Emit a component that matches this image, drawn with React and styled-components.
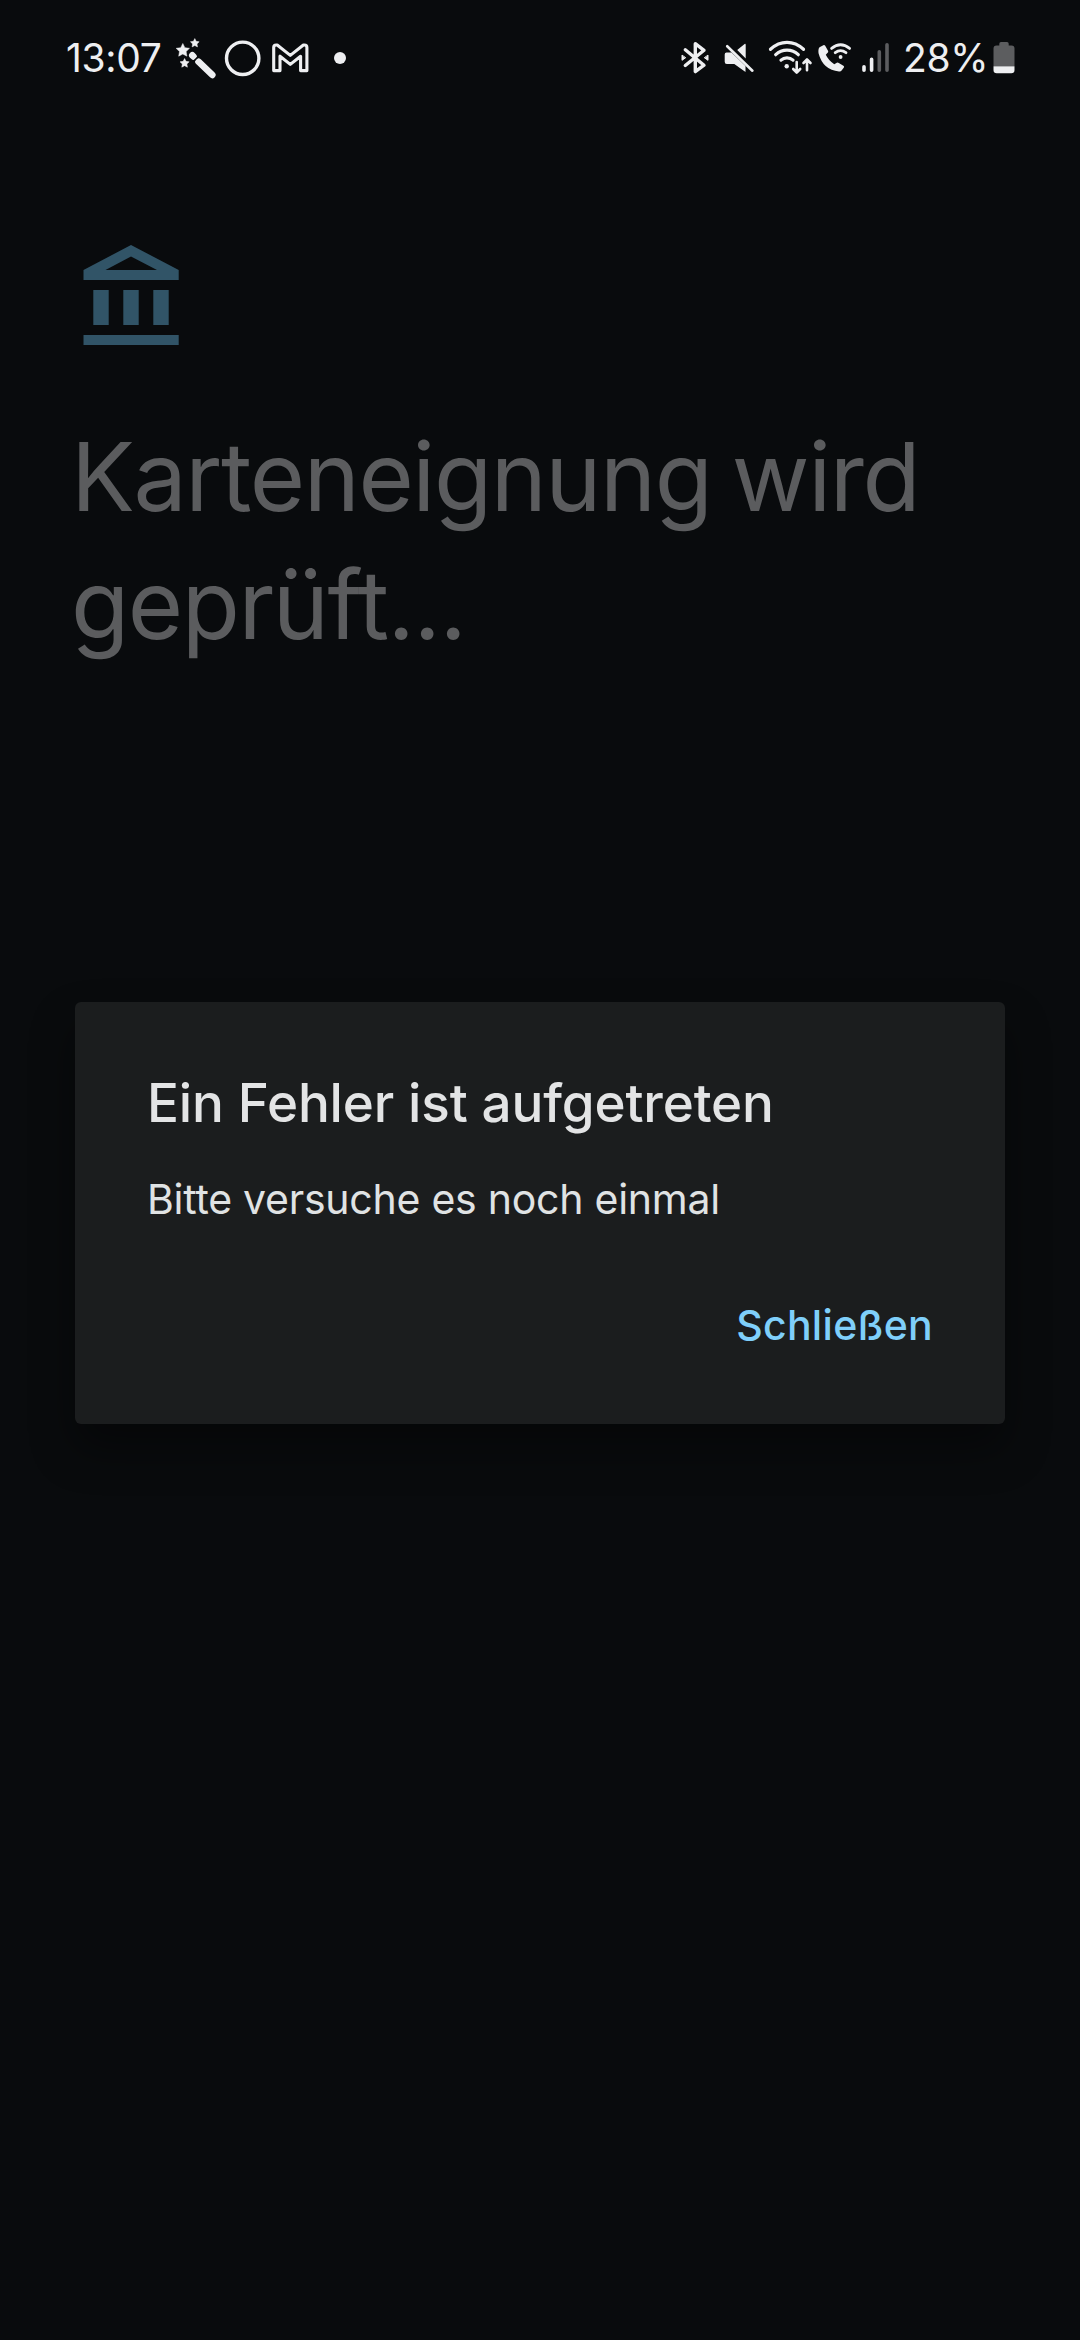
import React from 'react';
import styled, { createGlobalStyle } from 'styled-components';

const GlobalStyle = createGlobalStyle`
  * { box-sizing: border-box; }
  body {
    margin: 0;
    background: #090b0d;
    font-family: Inter, Roboto, sans-serif;
  }
`;

const Screen = styled.div`
  width: 1080px;
  height: 2340px;
  display: flex;
  flex-direction: column;
  background: #090b0d;
  overflow: hidden;
`;

const StatusBar = styled.header`
  display: flex;
  justify-content: space-between;
  padding: 36px 65px 0 66px;
  height: 116px;
  color: #eeeff1;
`;

const StatusGroup = styled.div`
  display: flex;
  height: 44px;
`;

const StatusText = styled.span`
  width: ${(p) => p.$width}px;
  margin-left: ${(p) => p.$gap || 0}px;
  font-size: 39px;
  line-height: 44px;
  letter-spacing: ${(p) => p.$tracking}px;
  white-space: nowrap;
`;

const Glyph = styled.svg`
  flex: none;
  display: block;
  height: 44px;
  margin-left: ${(p) => p.$gap || 0}px;
`;

const Content = styled.main`
  display: flex;
  flex-direction: column;
  padding: 129px 75px 0;
  height: 886px;
`;

const BankIcon = styled.svg`
  display: block;
  margin-left: 8px;
  fill: #315467;
`;

const Heading = styled.h1`
  margin: 68px 0 0 -4px;
  font-size: 95px;
  font-weight: 400;
  line-height: 128px;
  letter-spacing: -1.45px;
  word-spacing: -5px;
  color: #5b5c5e;
  white-space: nowrap;
`;

const Dialog = styled.section`
  width: 930px;
  height: 422px;
  margin: 0 auto;
  padding: 63px 72px 0 72px;
  display: flex;
  flex-direction: column;
  border-radius: 6px;
  background: #1b1d1e;
  box-shadow: 0 24px 44px rgba(0, 0, 0, 0.4);
`;

const DialogTitle = styled.h2`
  margin: 0;
  font-size: 53px;
  font-weight: 500;
  line-height: 76px;
  letter-spacing: -0.15px;
  color: #e3e4e5;
  white-space: nowrap;
`;

const DialogText = styled.p`
  margin: 30px 0 0;
  font-size: 41px;
  line-height: 56px;
  letter-spacing: -0.25px;
  color: #e0e3e4;
  white-space: nowrap;
`;

const Actions = styled.footer`
  display: flex;
  justify-content: flex-end;
  margin-top: 70px;
`;

const TextButton = styled.button`
  padding: 0;
  border: 0;
  background: none;
  font: 500 41px/56px Inter, Roboto, sans-serif;
  letter-spacing: 0.3px;
  color: #7fcffa;
  white-space: nowrap;
`;

const star = (cx, cy, r) =>
  Array.from({ length: 10 }, (_, i) => {
    const a = -Math.PI / 2 + (i * Math.PI) / 5;
    const d = i % 2 ? r * 0.5 : r;
    return `${(cx + d * Math.cos(a)).toFixed(2)},${(cy + d * Math.sin(a)).toFixed(2)}`;
  }).join(' ');

const Wand = () => (
  <Glyph $gap={16} width="40" viewBox="0 0 40 44" fill="currentColor" stroke="currentColor">
    <polygon points={star(6.8, 14.5, 7)} strokeWidth="0.5" />
    <polygon points={star(18.8, 7.2, 4.6)} strokeWidth="0.5" />
    <polygon points={star(8.6, 27.3, 4.8)} strokeWidth="0.5" />
    <path d="M16.3 19.3l1.2 1.2M22.5 25.7l13.8 13.2" fill="none" strokeWidth="6.6" strokeLinecap="round" />
    <path d="M18.1 24.8l5.2-5.2" fill="none" stroke="#090b0d" strokeWidth="1.5" />
  </Glyph>
);

const Ring = () => (
  <Glyph $gap={8} width="38" viewBox="0 0 38 44" fill="none" stroke="currentColor" strokeWidth="3.4">
    <circle cx="18.7" cy="22.3" r="16.2" />
  </Glyph>
);

const Mail = () => (
  <Glyph $gap={9} width="38" viewBox="0 0 38 44" fill="none" stroke="currentColor" strokeWidth="3.1" strokeLinejoin="round">
    <path d="M2.7 11.5Q2.7 9 5.2 9H6.2L19.3 19.4 32.4 9H33.4Q35.9 9 35.9 11.5V34.6H29.6V20.2L19.3 28.4 9 20.2V34.6H2.7Z" />
  </Glyph>
);

const Dot = () => (
  <Glyph $gap={24} width="14" viewBox="0 0 14 44" fill="currentColor">
    <circle cx="7" cy="22" r="6" />
  </Glyph>
);

const Bluetooth = () => (
  <Glyph width="28" viewBox="0 0 28 44" fill="none" stroke="currentColor" strokeWidth="3.4" strokeLinecap="round" strokeLinejoin="round">
    <path d="M4.3 13.8L23 29.2 14.3 35.6V7.7L23 14.3 4.3 29.5" />
    <path d="M1 19.5v4.8l3.4-2.4zM27 19.5v4.8l-3.4-2.4z" fill="currentColor" strokeWidth="1" />
  </Glyph>
);

const Muted = () => (
  <Glyph $gap={15} width="31" viewBox="0 0 31 44" fill="currentColor">
    <path d="M2.5 16.5H7.5L21.5 30V36L10.3 28H2.8Q.7 28 .7 25.8V18.6Q.7 16.5 2.5 16.5ZM20 8.4Q21.7 7 21.7 9V22.5L13.2 14Z" />
    <path d="M3.2 10.2L28.4 34.7" fill="none" stroke="currentColor" strokeWidth="2.6" strokeLinecap="round" />
  </Glyph>
);

const Wifi = () => (
  <Glyph $gap={13} width="45" viewBox="0 0 45 44" fill="none" stroke="currentColor" strokeWidth="3.2" strokeLinecap="round" strokeLinejoin="round">
    <path d="M2.5 13.3Q10 6.4 19 6.4T35.5 13.3M7.7 18.7Q12.5 14.2 19 14.2T30.3 18.7M13 24.1Q15.5 21.8 19 21.8T25 24.1" />
    <circle cx="18.7" cy="30.3" r="2.2" fill="currentColor" stroke="none" />
    <path d="M28.7 26V36M25.2 33L28.7 36.6 32.2 33M39 34.3V24M35.5 27L39 23.4 42.5 27" strokeWidth="2.6" />
  </Glyph>
);

const WifiCall = () => (
  <Glyph $gap={5} width="35" viewBox="0 0 35 44" fill="none" stroke="currentColor" strokeLinecap="round">
    <path d="M1.5 11.3L5.3 9.2Q6.4 8.6 7.2 9.8L10 14.7Q10.6 15.8 9.6 16.8L7.8 18.8Q10.5 24.5 16.3 28.3L18.8 26.8Q19.8 26.2 20.8 27L25.4 29.8Q26.6 30.6 25.7 31.8L23.6 34.5Q22.7 35.7 21 35.4 5 34 .6 17.5-.1 12.7 1.5 11.3Z" fill="currentColor" stroke="none" />
    <path d="M13.6 12.4Q22.5 5.2 31.6 12.4M17.2 16.7Q22.5 12.5 28 16.7" strokeWidth="2.8" />
    <circle cx="22.6" cy="21" r="1.9" fill="currentColor" stroke="none" />
  </Glyph>
);

const Signal = () => (
  <Glyph $gap={8} width="29" viewBox="0 0 29 44" fill="none" stroke="currentColor" strokeWidth="3.6" strokeLinecap="round">
    <path d="M3 30.8V34.2M10.6 23.3V34.2" />
    <path d="M18.3 15.8V34.2M26 8.7V34.2" stroke="#5c5d5f" />
  </Glyph>
);

const Battery = () => (
  <Glyph $gap={5} width="22" viewBox="0 0 22 44">
    <path d="M6.3 7.8Q6.3 6 8 6H14Q15.7 6 15.7 7.8V9.5H18.5Q21.5 9.5 21.5 12.5V30H.5V12.5Q.5 9.5 3.5 9.5H6.3Z" fill="#5c5d5f" />
    <path d="M.5 30.2H21.5V34Q21.5 37.2 18.3 37.2H3.7Q.5 37.2.5 34Z" fill="currentColor" />
  </Glyph>
);

export default function App() {
  return (
    <Screen>
      <GlobalStyle />
      <StatusBar>
        <StatusGroup>
          <StatusText $width={94} $tracking={-0.3}>13:07</StatusText>
          <Wand />
          <Ring />
          <Mail />
          <Dot />
        </StatusGroup>
        <StatusGroup>
          <Bluetooth />
          <Muted />
          <Wifi />
          <WifiCall />
          <Signal />
          <StatusText $gap={13} $width={85} $tracking={-0.3}>28%</StatusText>
          <Battery />
        </StatusGroup>
      </StatusBar>
      <Content>
        <BankIcon width="96" height="100" viewBox="0 0 96 100">
          <path fillRule="evenodd" d="M.5 35V25L48 0 95.7 25V35ZM22.5 25H74L48 11.5Z" />
          <path d="M10.3 45H25.7V80H10.3ZM40.3 45H55.7V80H40.3ZM70.3 45H85.7V80H70.3ZM.5 90H95.7V100H.5Z" />
        </BankIcon>
        <Heading>Karteneignung wird<br />geprüft...</Heading>
      </Content>
      <Dialog role="alertdialog">
        <DialogTitle>Ein Fehler ist aufgetreten</DialogTitle>
        <DialogText>Bitte versuche es noch einmal</DialogText>
        <Actions>
          <TextButton>Schließen</TextButton>
        </Actions>
      </Dialog>
    </Screen>
  );
}
